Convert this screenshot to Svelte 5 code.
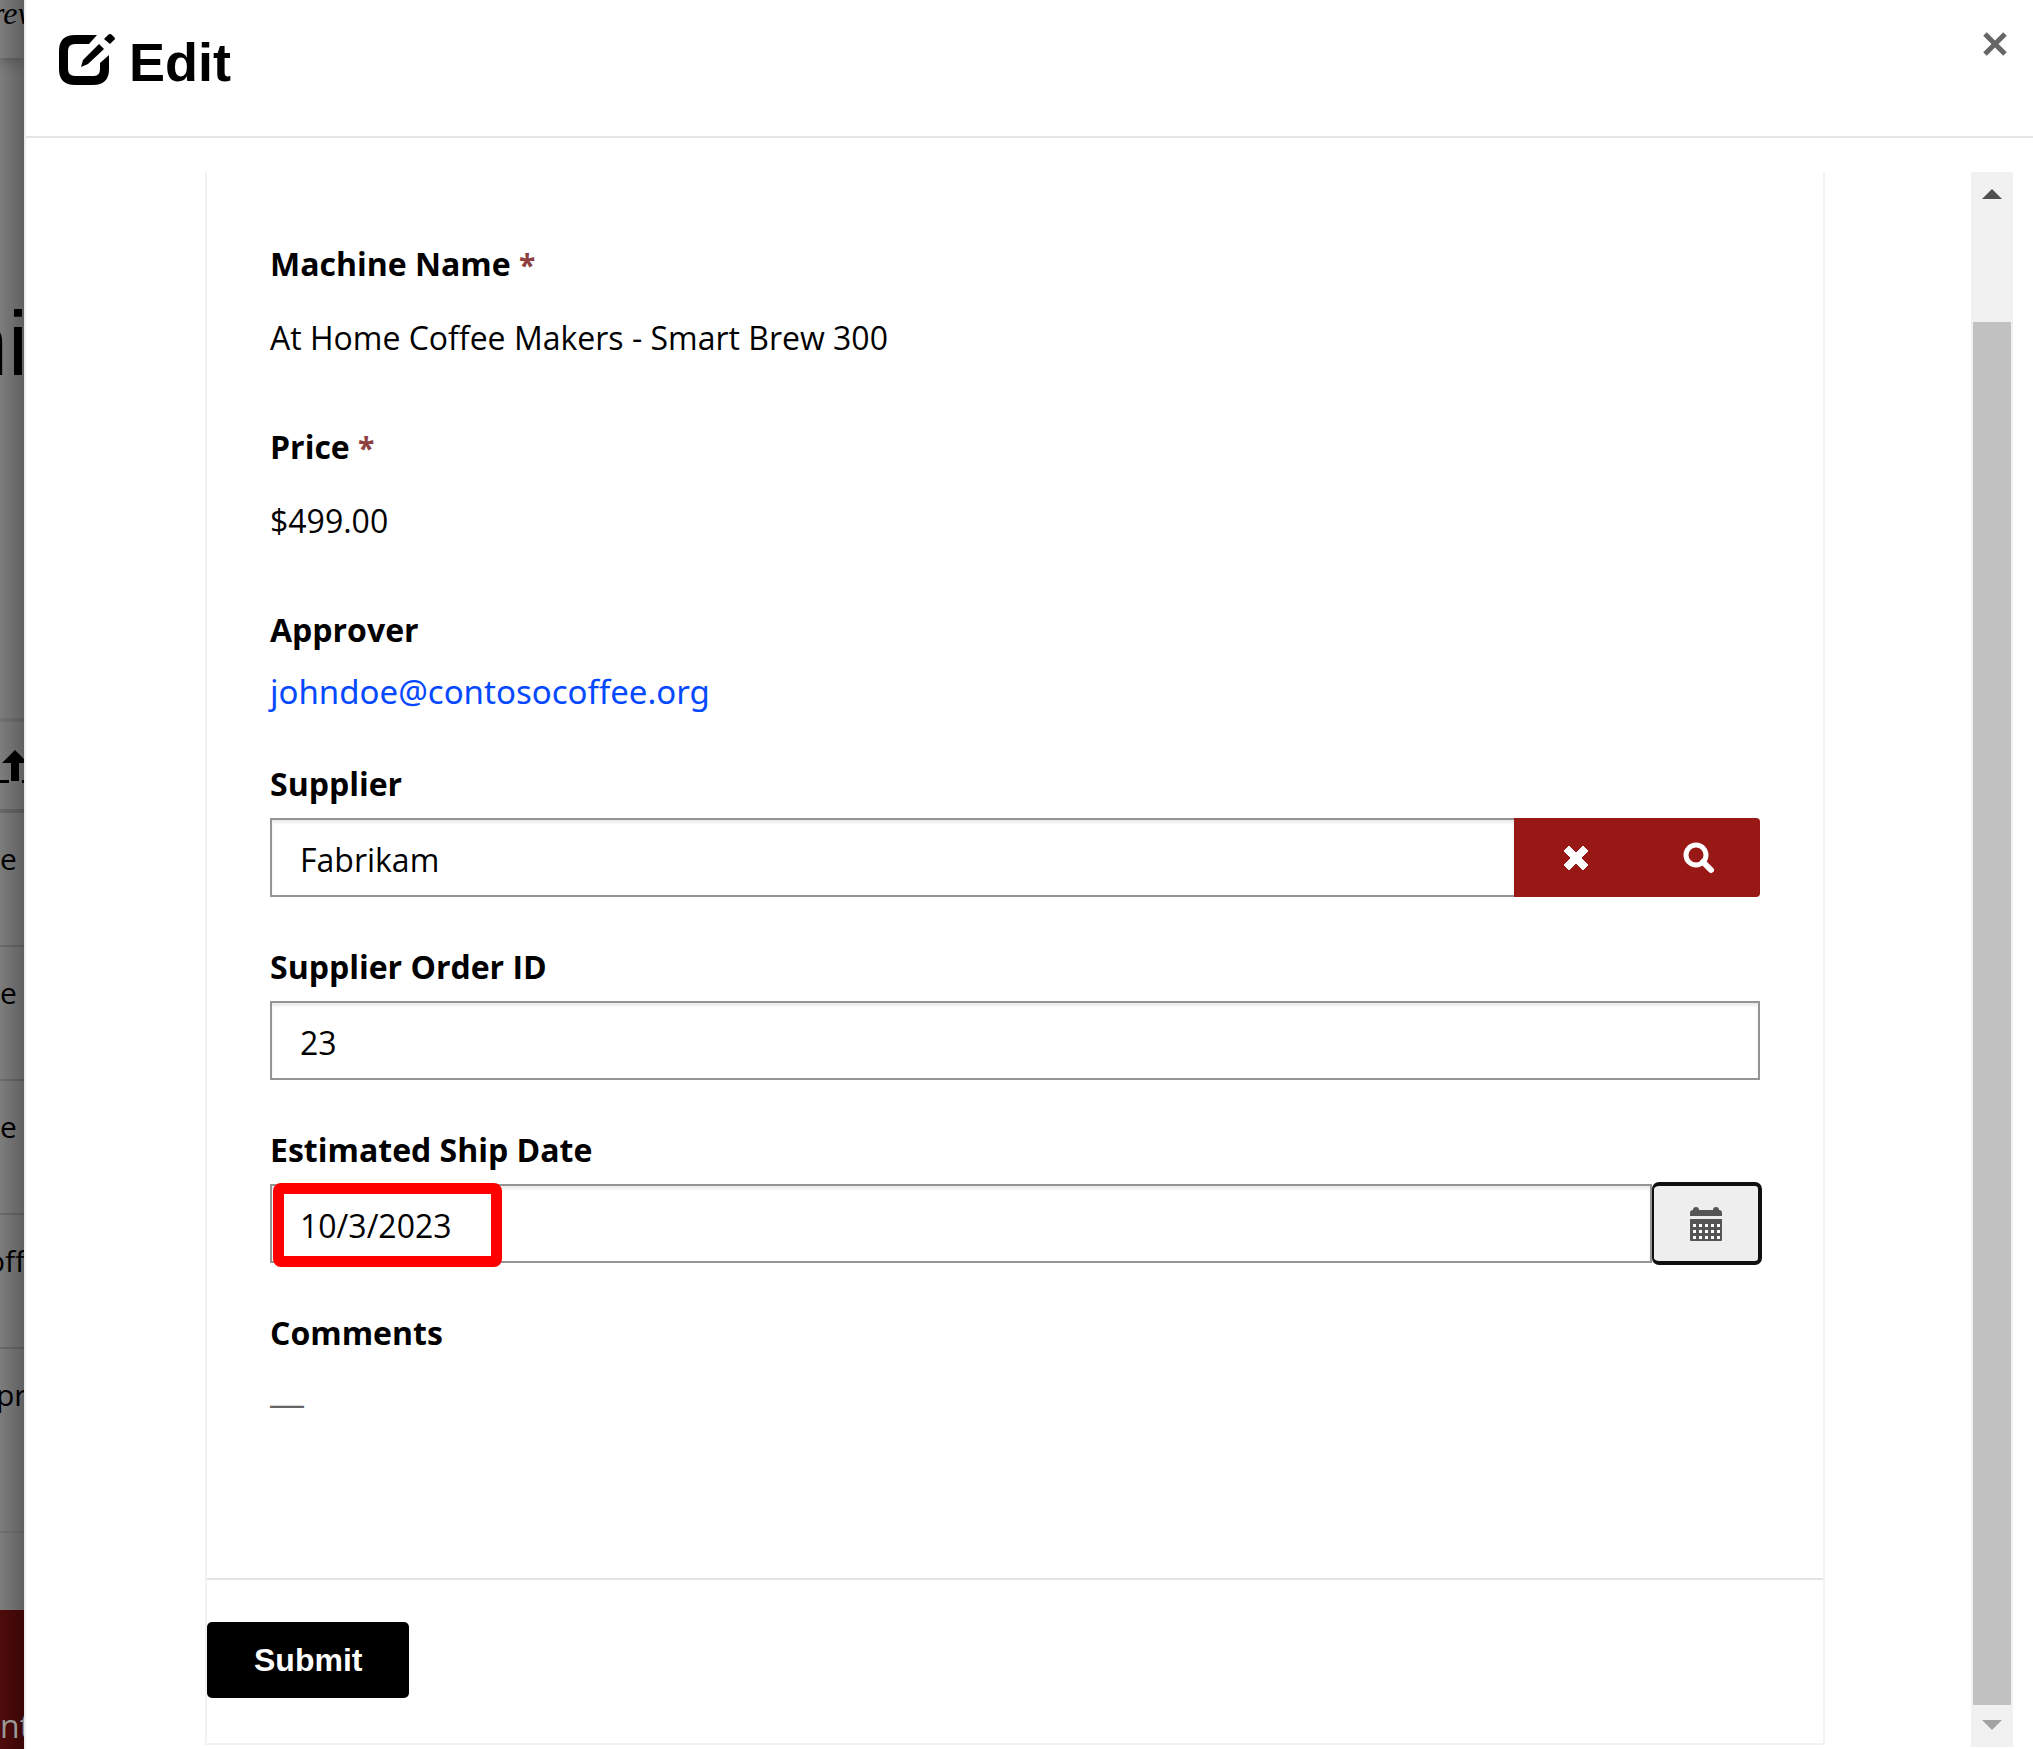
<script>
  const rows = ['e', 'e', 'e', 'off', 'pr'];
  let supplier = $state('Fabrikam');
  let orderId = $state('23');
  let shipDate = $state('10/3/2023');
  const dots = [0, 1, 2].flatMap((r) => [0, 1, 2, 3, 4].map((c) => ({ x: 3 + c * 6, y: 17 + r * 6 })));
</script>

<div class="stage">
  <div class="behind">
    <div class="brand">rew</div>
    <div class="title">ni</div>
    <div class="sort">
      <svg width="24" height="36" viewBox="0 0 24 36" aria-hidden="true">
        <path d="M15 1L28 14H19V32H11V14H2Z" />
        <path d="M0 31h9v3h-9zM22 31h2v3h-2z" />
      </svg>
    </div>
    {#each rows as text, i}
      <div class="row" class:tall={i === 4} class:shift={i > 2}>{text}</div>
    {/each}
    <div class="rest"></div>
    <div class="foot">nt</div>
  </div>

  <main class="modal">
    <header>
      <svg class="edit" width="56" height="52" viewBox="0 0 56 52" aria-hidden="true">
        <path d="M38 1H16Q0 1 0 17V35Q0 51 16 51H34Q50 51 50 35V21L41 29V35Q41 42 35 42H16Q9 42 9 35V17Q9 10 16 10H30Z" />
        <path d="M40 10L45 15L29 30L22 33L24 26Z" />
        <path d="M45 5L49 1Q51 -1 53 1L55 3Q57 5 55 6L51 10Z" />
      </svg>
      <h1>Edit</h1>
      <button class="close" aria-label="Close">
        <svg width="24" height="24" viewBox="0 0 24 24"><path d="M2 2L22 22M22 2L2 22" /></svg>
      </button>
    </header>

    <div class="body">
      <form onsubmit={(e) => e.preventDefault()}>
        <div class="fields">
          <div class="field">
            <span class="label">Machine Name <i>*</i></span>
            <div class="value">At Home Coffee Makers - Smart Brew 300</div>
          </div>
          <div class="field">
            <span class="label">Price <i>*</i></span>
            <div class="value">$499.00</div>
          </div>
          <div class="field approver">
            <span class="label">Approver</span>
            <a href="mailto:johndoe@contosocoffee.org">johndoe@contosocoffee.org</a>
          </div>
          <div class="field">
            <label class="label" for="supplier">Supplier</label>
            <div class="group">
              <input id="supplier" class="joined" type="text" bind:value={supplier} />
              <div class="lookup">
                <button type="button" aria-label="Clear supplier">
                  <svg width="26" height="26" viewBox="0 0 26 26">
                    <path d="M6 1L13 8L20 1L25 6L18 13L25 20L20 25L13 18L6 25L1 20L8 13L1 6Z" fill="#fff" stroke="#fff" stroke-linejoin="round" />
                  </svg>
                </button>
                <button type="button" aria-label="Search supplier">
                  <svg width="32" height="32" viewBox="0 0 32 32" fill="none" stroke="#fff">
                    <circle cx="13" cy="13" r="10" stroke-width="5" />
                    <path d="M20 20L28 28" stroke-width="6" stroke-linecap="round" />
                  </svg>
                </button>
              </div>
            </div>
          </div>
          <div class="field">
            <label class="label" for="order">Supplier Order ID</label>
            <div class="group"><input id="order" type="text" bind:value={orderId} /></div>
          </div>
          <div class="field">
            <label class="label" for="ship">Estimated Ship Date</label>
            <div class="group">
              <input id="ship" type="text" bind:value={shipDate} />
              <button class="date" type="button" aria-label="Choose a date">
                <svg width="32" height="34" viewBox="0 0 32 34">
                  <path d="M3 3Q3 0 6 0Q9 0 9 3H23Q23 0 26 0Q29 0 29 3Q32 3 32 6V9H0V6Q0 3 3 3ZM0 12H32V33Q32 34 31 34H1Q0 34 0 33Z" fill="#555" />
                  {#each dots as d}
                    <rect x={d.x} y={d.y} width="3" height="3" fill="#fff" />
                  {/each}
                </svg>
              </button>
              <span class="mark"></span>
            </div>
          </div>
          <div class="field">
            <span class="label">Comments</span>
            <div class="value empty">—</div>
          </div>
        </div>
        <div class="actions"><button class="submit">Submit</button></div>
      </form>

      <div class="scroll" aria-hidden="true">
        <svg class="up" width="20" height="10" viewBox="0 0 20 10"><path d="M10 0L20 10H0Z" /></svg>
        <div class="thumb"></div>
        <svg class="down" width="20" height="10" viewBox="0 0 20 10"><path d="M0 0H20L10 10Z" /></svg>
      </div>
    </div>
  </main>
</div>

<style>
  :global(body) { margin: 0; }
  .stage, .stage :global(*) { box-sizing: border-box; }
  .stage {
    display: flex;
    min-height: 100vh;
    font-family: "Open Sans", "Noto Sans", sans-serif;
    font-size: 32px;
    color: #000;
    background: #fff;
  }
  button { padding: 0; border: 0; background: none; cursor: pointer; font: inherit; }
  svg { display: block; overflow: visible; }

  .behind {
    flex: 0 0 24px;
    width: 24px;
    overflow: hidden;
    display: flex;
    flex-direction: column;
    white-space: nowrap;
    background: linear-gradient(to right, #7d7d7d, #606060);
  }
  .brand {
    height: 58px;
    font: italic 32px/26px "Liberation Serif", serif;
    text-indent: -8px;
    box-shadow: 0 2px 16px rgba(0, 0, 0, 0.35);
  }
  .title {
    height: 664px;
    padding-top: 236px;
    font: 90px/100px "Liberation Sans", sans-serif;
    text-indent: -42px;
    border-bottom: 4px solid rgba(0, 0, 0, 0.08);
  }
  .sort {
    height: 91px;
    padding-top: 27px;
    overflow: hidden;
    border-bottom: 4px solid rgba(0, 0, 0, 0.16);
  }
  .row {
    height: 134px;
    padding-top: 24px;
    line-height: 44px;
    font-size: 30px;
    border-bottom: 2px solid rgba(0, 0, 0, 0.14);
  }
  .row.shift { text-indent: -13px; }
  .row.tall { height: 184px; border-color: rgba(0, 0, 0, 0.08); }
  .row.shift.tall { text-indent: -4px; }
  .rest { height: 77px; }
  .foot {
    flex: 1;
    padding-top: 94px;
    line-height: 44px;
    color: #999;
    background: linear-gradient(to right, #500b0b, #3a0606);
  }

  .modal {
    flex: 1;
    min-width: 0;
    display: flex;
    flex-direction: column;
    border-left: 2px solid #ececec;
  }
  header {
    display: flex;
    align-items: flex-start;
    height: 138px;
    padding: 32px 26px 0 33px;
    border-bottom: 2px solid #e5e5e5;
  }
  .edit { margin-top: 2px; }
  h1 {
    flex: 1;
    margin: 0 0 0 14px;
    font: bold 54px/60px "Liberation Sans", sans-serif;
  }
  .close path { stroke: #666; stroke-width: 5; }

  .body {
    flex: 1;
    display: flex;
    padding: 34px 20px 2px 179px;
  }
  form {
    flex: 1;
    min-width: 0;
    display: flex;
    flex-direction: column;
    margin: 0 146px 2px 0;
    border: 2px solid #f2f2f2;
    border-top: 0;
  }
  .fields { flex: 1; padding: 70px 63px 82px; }
  .field { margin-bottom: 48px; }
  .label {
    display: block;
    margin-bottom: 12px;
    line-height: 44px;
    font-weight: 700;
  }
  .label i { font-style: normal; font-size: 30px; line-height: 30px; color: #8e3f3f; }
  .value { line-height: 79px; }
  .empty { color: #666; font-family: "Liberation Sans", sans-serif; font-size: 34px; line-height: 72px; }
  .approver { margin-bottom: 42px; }
  .approver a {
    display: block;
    line-height: 56px;
    color: #0549ff;
    font-family: "Noto Sans", sans-serif;
    font-size: 33px;
    text-decoration: none;
  }
  .group { position: relative; display: flex; height: 79px; }
  input {
    flex: 1;
    min-width: 0;
    padding: 3px 28px 0;
    border: 2px solid #949494;
    border-radius: 0;
    outline: 0;
    background: #fff;
    box-shadow: inset 0 3px 3px rgba(0, 0, 0, 0.08);
    font: inherit;
    color: #000;
  }
  .joined { border-right: 0; }
  .lookup {
    display: flex;
    width: 246px;
    background: #981816;
    border-radius: 0 4px 4px 0;
  }
  .lookup button { flex: 1; display: grid; place-items: center; }
  .date {
    width: 110px;
    height: 83px;
    margin: -2px -2px 0 0;
    display: grid;
    place-items: center;
    border: 4px solid #101010;
    border-left-width: 2px;
    border-radius: 7px;
    background: #eee;
  }
  .mark {
    position: absolute;
    left: 3px;
    top: -1px;
    width: 229px;
    height: 84px;
    border: 11px solid #f00;
    border-radius: 8px;
    pointer-events: none;
  }
  .actions {
    padding: 42px 0 45px;
    border-top: 2px solid #e3e3e3;
  }
  .submit {
    display: block;
    height: 76px;
    padding: 0 47px;
    border-radius: 5px;
    background: #000;
    color: #fff;
    font: bold 32px "Liberation Sans", sans-serif;
  }

  .scroll {
    width: 42px;
    display: flex;
    flex-direction: column;
    align-items: center;
    padding: 17px 2px;
    background: #f1f1f1;
  }
  .up { fill: #505050; }
  .down { fill: #a3a3a3; }
  .thumb {
    flex: 1;
    align-self: stretch;
    margin: 123px 0 15px;
    background: #c1c1c1;
  }
</style>
